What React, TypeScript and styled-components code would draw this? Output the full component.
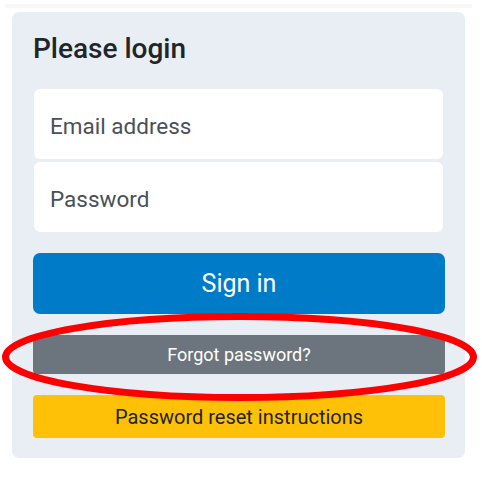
import styled, { createGlobalStyle } from 'styled-components'

const GlobalStyle = createGlobalStyle`
  html, body {
    margin: 0;
    padding: 0;
    background: #ffffff;
    font-family: Roboto, "Noto Sans", "Liberation Sans", sans-serif;
  }
`

const Page = styled.div`
  position: relative;
  width: 482px;
  height: 480px;
  overflow: hidden;
`

const TopStrip = styled.div`
  height: 4px;
  margin: 4px 10px 0 5px;
  background: #f7f7f7;
`

const Card = styled.form`
  box-sizing: border-box;
  width: 453px;
  height: 446px;
  margin: 4px 0 0 12px;
  padding: 21px 20px 0 21px;
  background: #e9edf4;
  border-radius: 7px;
  display: flex;
  flex-direction: column;
`

const Title = styled.h1`
  margin: 0;
  font-size: 28px;
  line-height: 32px;
  font-weight: 500;
  color: #212529;
`

const Fields = styled.div`
  display: flex;
  flex-direction: column;
  gap: 3px;
  margin: 24px 2px 0 1px;
`

const Field = styled.input`
  box-sizing: border-box;
  height: 70px;
  width: 100%;
  padding: 3px 16px 0;
  border: none;
  background: #ffffff;
  border-radius: 6px;
  font-family: inherit;
  font-size: 22.5px;
  color: #495057;
  outline: none;

  &::placeholder {
    color: #495057;
  }
`

const Button = styled.button<{ $tone: 'primary' | 'secondary' | 'warning'; $h: number; $fs: number; $top: number }>`
  box-sizing: border-box;
  width: 100%;
  height: ${(p) => p.$h}px;
  margin-top: ${(p) => p.$top}px;
  border: none;
  border-radius: ${(p) => (p.$tone === 'primary' ? 7 : 4)}px;
  font-family: inherit;
  font-size: ${(p) => p.$fs}px;
  background: ${(p) => (p.$tone === 'primary' ? '#007bc7' : p.$tone === 'secondary' ? '#6c757d' : '#ffc107')};
  color: ${(p) => (p.$tone === 'warning' ? '#212529' : '#ffffff')};
  cursor: pointer;
`

const Highlight = styled.svg`
  position: absolute;
  left: 0;
  top: 0;
  pointer-events: none;
`

export default function App() {
  return (
    <Page>
      <GlobalStyle />
      <TopStrip />
      <Card onSubmit={(e) => e.preventDefault()}>
        <Title>Please login</Title>
        <Fields>
          <Field type="email" placeholder="Email address" />
          <Field type="password" placeholder="Password" />
        </Fields>
        <Button $tone="primary" $h={61} $fs={25} $top={21}>
          Sign in
        </Button>
        <Button type="button" $tone="secondary" $h={39} $fs={18} $top={21}>
          Forgot password?
        </Button>
        <Button type="button" $tone="warning" $h={43} $fs={20} $top={21}>
          Password reset instructions
        </Button>
      </Card>
      <Highlight width="482" height="480" viewBox="0 0 482 480">
        <ellipse cx="239.5" cy="357" rx="234" ry="40.5" fill="none" stroke="#ff0000" strokeWidth="7" />
      </Highlight>
    </Page>
  )
}
